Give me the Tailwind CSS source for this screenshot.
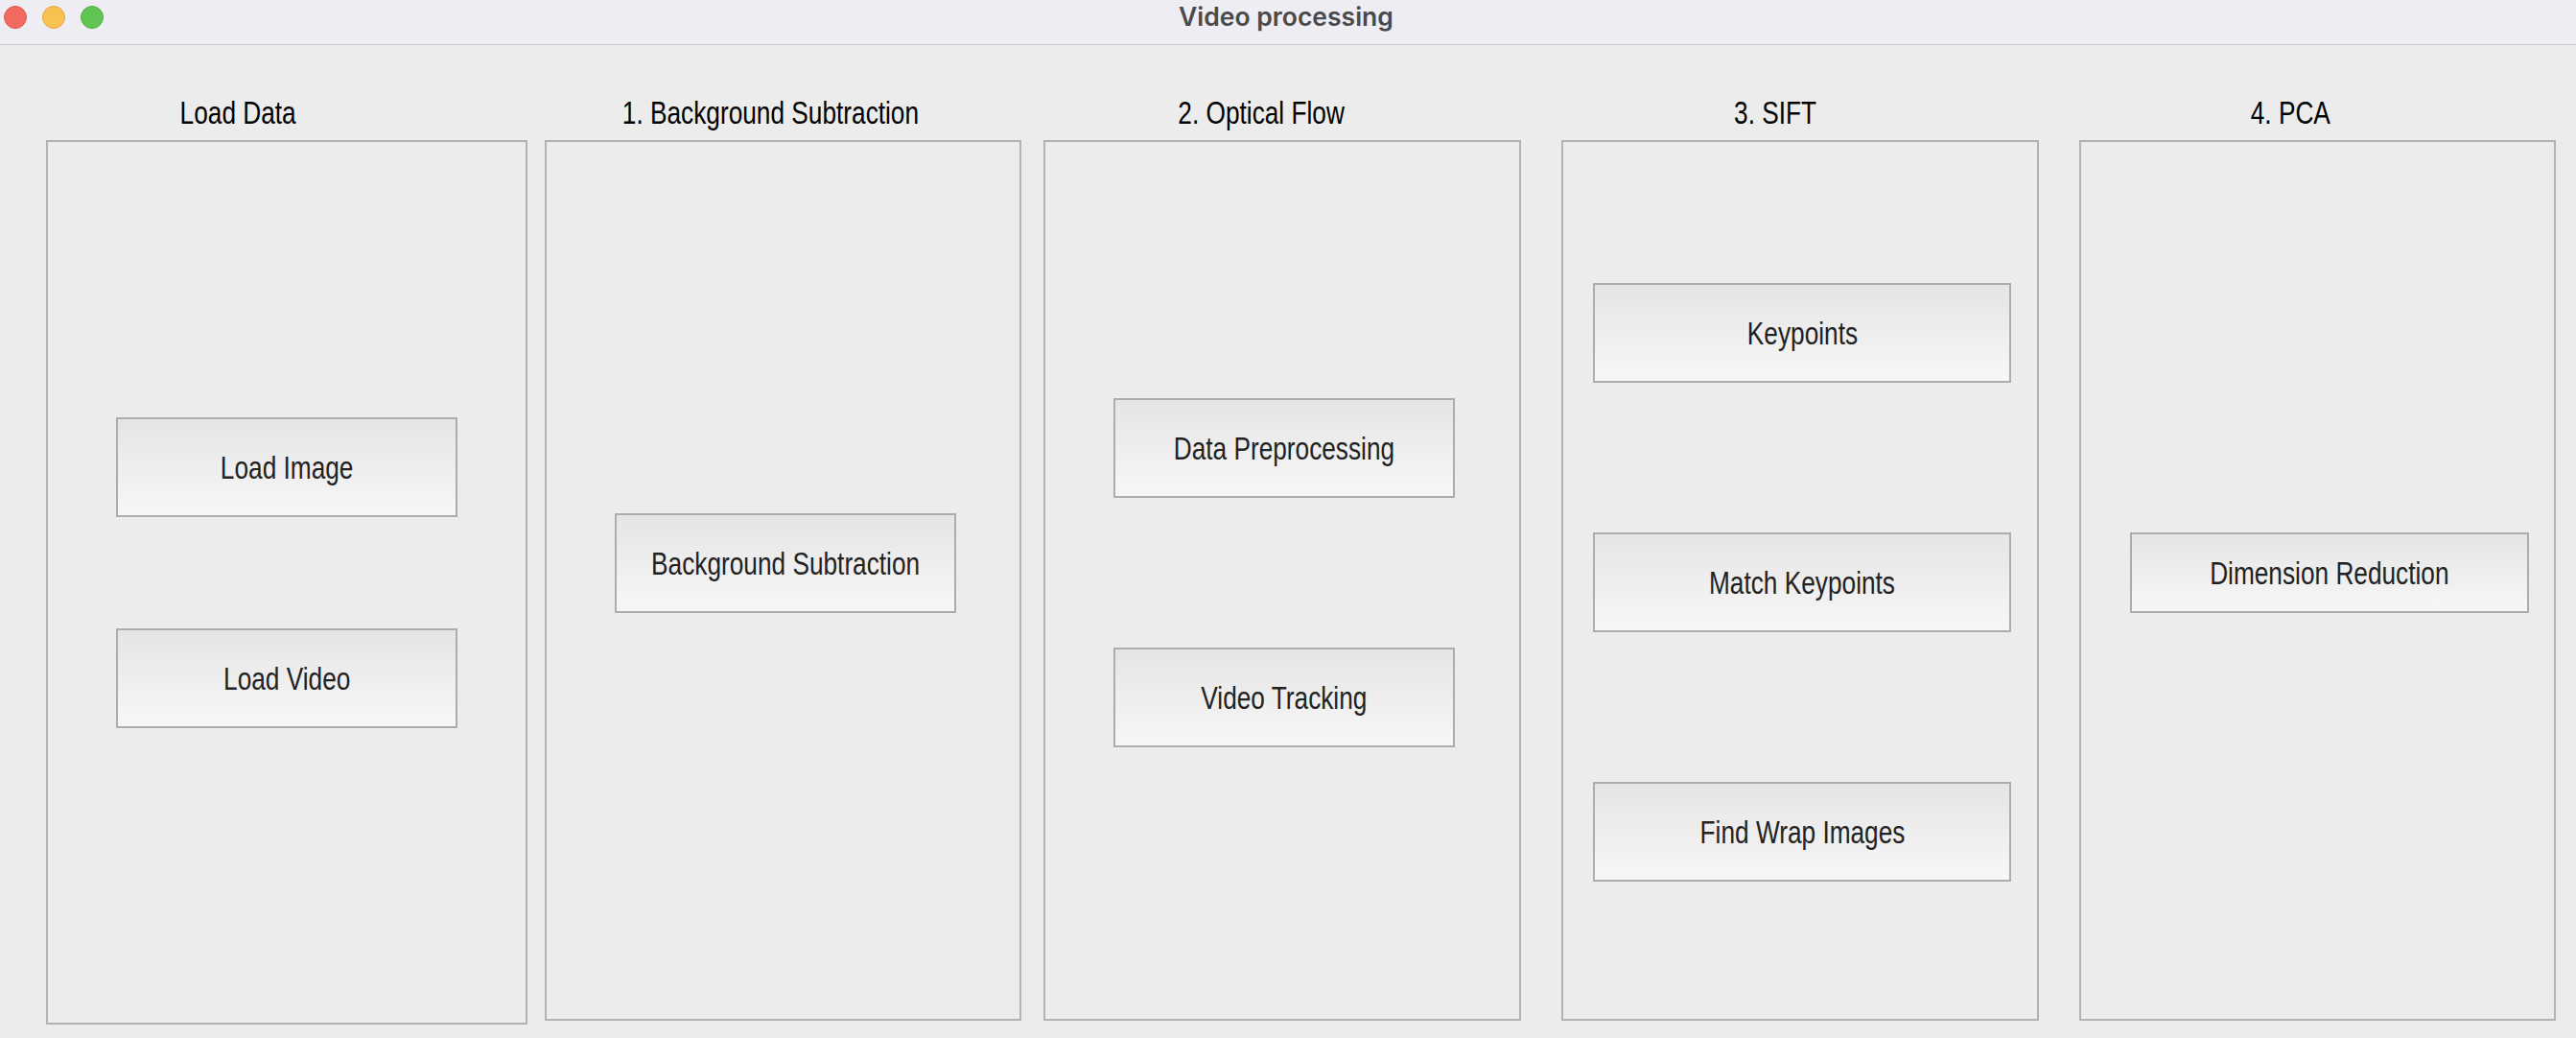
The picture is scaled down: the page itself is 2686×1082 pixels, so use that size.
<!DOCTYPE html>
<html>
<head>
<meta charset="utf-8">
<script src="https://cdn.jsdelivr.net/npm/@tailwindcss/browser@4"></script>
</head>
<body class="m-0 overflow-hidden">
<div class="flex h-[1082px] w-[2686px] flex-col bg-[#ececec] font-['Liberation_Sans',Arial,sans-serif]">
  <header class="grid h-[47px] shrink-0 grid-cols-[1fr_auto_1fr] items-start border-b border-[#cacaca] bg-[#efedf4]">
    <div class="flex gap-[16px] pl-[4px] pt-[6px]">
      <span class="size-[24px] rounded-full border border-[#e0564c] bg-[#f26b60]"></span>
      <span class="size-[24px] rounded-full border border-[#e3a544] bg-[#f9c14f]"></span>
      <span class="size-[24px] rounded-full border border-[#52ae47] bg-[#61c554]"></span>
    </div>
    <div class="pt-[1px] pr-[4px] font-['Inter',sans-serif] text-[26.5px] leading-[32px] font-semibold text-[#4a4a4a]">Video processing</div>
    <div></div>
  </header>
  <main class="flex items-start pl-[48px]">
    <section class="w-[502px]">
      <div class="flex h-[99px] items-end justify-center pb-[8px] pr-[102px]"><span class="scale-x-[0.795] text-[33px] leading-[40px] whitespace-nowrap text-black">Load Data</span></div>
      <div class="flex h-[922px] flex-col border-2 border-[#b3b3b3] pl-[71px]">
        <button class="mt-[287px] flex h-[104px] w-[356px] items-center justify-center border-2 border-[#adadad] bg-linear-to-b from-[#e5e5e5] to-[#f7f7f7] pt-[2px]"><span class="scale-x-[0.795] text-[33px] leading-[40px] whitespace-nowrap text-[#222]">Load Image</span></button>
        <button class="mt-[116px] flex h-[104px] w-[356px] items-center justify-center border-2 border-[#adadad] bg-linear-to-b from-[#e5e5e5] to-[#f7f7f7] pt-[2px]"><span class="scale-x-[0.795] text-[33px] leading-[40px] whitespace-nowrap text-[#222]">Load Video</span></button>
      </div>
    </section>
    <section class="ml-[18px] w-[497px]">
      <div class="flex h-[99px] items-end justify-center pb-[8px] pr-[27px]"><span class="scale-x-[0.795] text-[33px] leading-[40px] whitespace-nowrap text-black">1. Background Subtraction</span></div>
      <div class="flex h-[918px] flex-col border-2 border-[#b3b3b3] pl-[71px]">
        <button class="mt-[387px] flex h-[104px] w-[356px] items-center justify-center border-2 border-[#adadad] bg-linear-to-b from-[#e5e5e5] to-[#f7f7f7] pt-[2px]"><span class="scale-x-[0.795] text-[33px] leading-[40px] whitespace-nowrap text-[#222]">Background Subtraction</span></button>
      </div>
    </section>
    <section class="ml-[23px] w-[498px]">
      <div class="flex h-[99px] items-end justify-center pb-[8px] pr-[44px]"><span class="scale-x-[0.795] text-[33px] leading-[40px] whitespace-nowrap text-black">2. Optical Flow</span></div>
      <div class="flex h-[918px] flex-col border-2 border-[#b3b3b3] pl-[71px]">
        <button class="mt-[267px] flex h-[104px] w-[356px] items-center justify-center border-2 border-[#adadad] bg-linear-to-b from-[#e5e5e5] to-[#f7f7f7] pt-[2px]"><span class="scale-x-[0.795] text-[33px] leading-[40px] whitespace-nowrap text-[#222]">Data Preprocessing</span></button>
        <button class="mt-[156px] flex h-[104px] w-[356px] items-center justify-center border-2 border-[#adadad] bg-linear-to-b from-[#e5e5e5] to-[#f7f7f7] pt-[2px]"><span class="scale-x-[0.795] text-[33px] leading-[40px] whitespace-nowrap text-[#222]">Video Tracking</span></button>
      </div>
    </section>
    <section class="ml-[42px] w-[498px]">
      <div class="flex h-[99px] items-end justify-center pb-[8px] pr-[52px]"><span class="scale-x-[0.795] text-[33px] leading-[40px] whitespace-nowrap text-black">3. SIFT</span></div>
      <div class="flex h-[918px] flex-col border-2 border-[#b3b3b3] pl-[31px]">
        <button class="mt-[147px] flex h-[104px] w-[436px] items-center justify-center border-2 border-[#adadad] bg-linear-to-b from-[#e5e5e5] to-[#f7f7f7] pt-[2px]"><span class="scale-x-[0.795] text-[33px] leading-[40px] whitespace-nowrap text-[#222]">Keypoints</span></button>
        <button class="mt-[156px] flex h-[104px] w-[436px] items-center justify-center border-2 border-[#adadad] bg-linear-to-b from-[#e5e5e5] to-[#f7f7f7] pt-[2px]"><span class="scale-x-[0.795] text-[33px] leading-[40px] whitespace-nowrap text-[#222]">Match Keypoints</span></button>
        <button class="mt-[156px] flex h-[104px] w-[436px] items-center justify-center border-2 border-[#adadad] bg-linear-to-b from-[#e5e5e5] to-[#f7f7f7] pt-[2px]"><span class="scale-x-[0.795] text-[33px] leading-[40px] whitespace-nowrap text-[#222]">Find Wrap Images</span></button>
      </div>
    </section>
    <section class="ml-[42px] w-[497px]">
      <div class="flex h-[99px] items-end justify-center pb-[8px] pr-[56px]"><span class="scale-x-[0.795] text-[33px] leading-[40px] whitespace-nowrap text-black">4. PCA</span></div>
      <div class="flex h-[918px] flex-col border-2 border-[#b3b3b3] pl-[51px]">
        <button class="mt-[407px] flex h-[84px] w-[416px] items-center justify-center border-2 border-[#adadad] bg-linear-to-b from-[#e5e5e5] to-[#f7f7f7] pt-[2px]"><span class="scale-x-[0.795] text-[33px] leading-[40px] whitespace-nowrap text-[#222]">Dimension Reduction</span></button>
      </div>
    </section>
  </main>
</div>
</body>
</html>
